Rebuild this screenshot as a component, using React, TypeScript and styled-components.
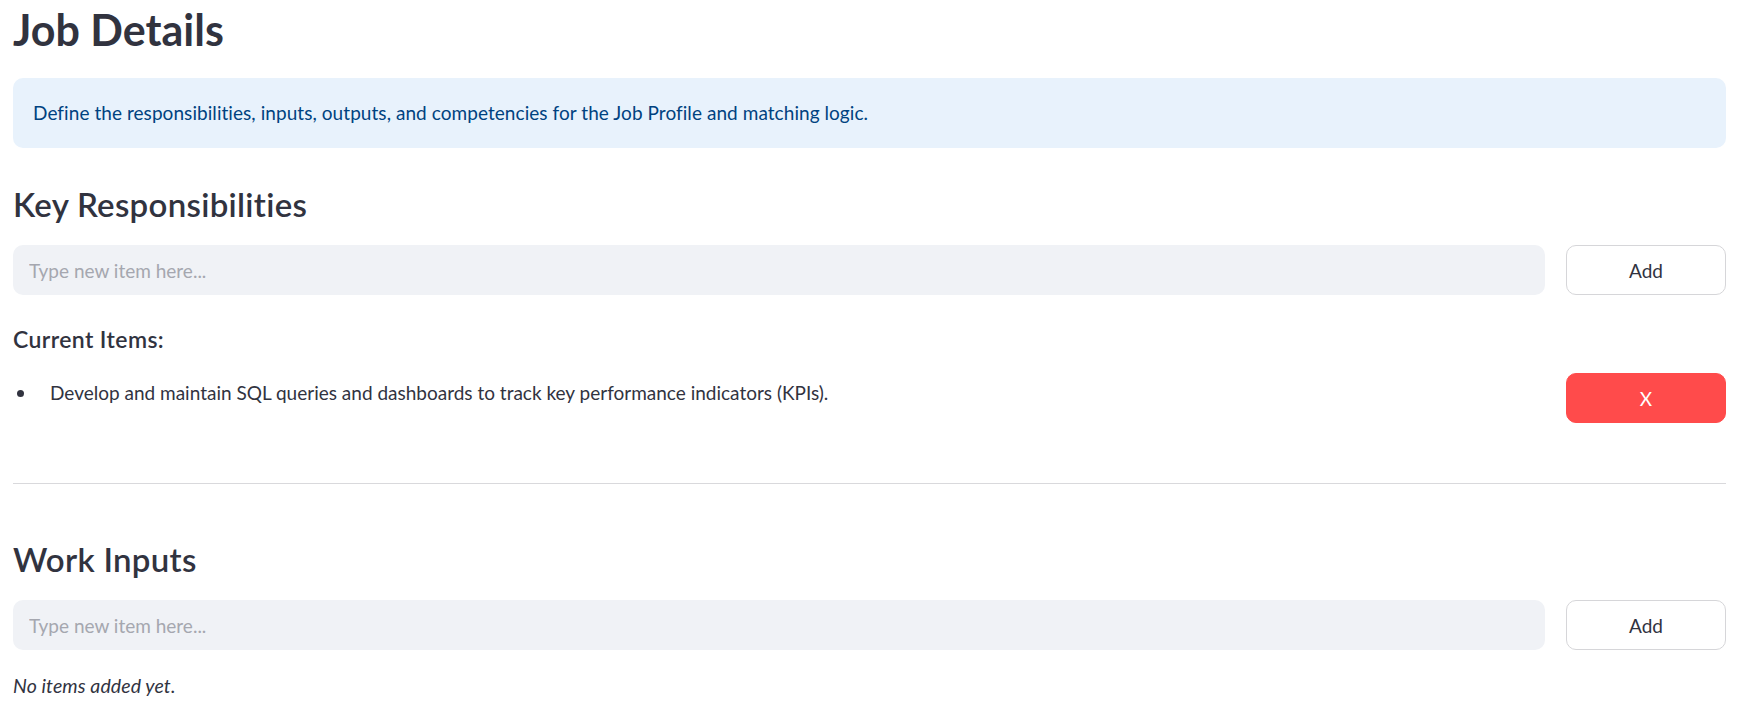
import React from "react";
import styled, { createGlobalStyle } from "styled-components";

const Global = createGlobalStyle`
  html, body { margin: 0; padding: 0; background: #ffffff; }
  body {
    font-family: "Lato", "Noto Sans", sans-serif;
    color: #31333f;
    -webkit-font-smoothing: antialiased;
  }
  * { box-sizing: border-box; }
`;

const Page = styled.main`
  width: 1760px;
  padding: 3px 34px 0 13px;
  display: flex;
  flex-direction: column;
`;

const Title = styled.h2`
  margin: 0;
  font-size: 43px;
  line-height: 54px;
  font-weight: 700;
  color: #31333f;
`;

const InfoBox = styled.div`
  margin-top: 21px;
  background: #e8f2fc;
  border-radius: 10px;
  padding: 20px 20px;
  color: #004280;
  font-size: 19px;
  line-height: 30px;
  letter-spacing: 0.06px;
`;

const SubHeader = styled.h3<{ $top: number }>`
  margin: ${(p) => p.$top}px 0 0;
  font-size: 33px;
  line-height: 40px;
  font-weight: 600;
  letter-spacing: 0.3px;
  color: #31333f;
`;

const InputRow = styled.div`
  margin-top: 21px;
  display: grid;
  grid-template-columns: 1fr 160px;
  column-gap: 21px;
  align-items: start;
`;

const TextInput = styled.input`
  height: 50px;
  width: 100%;
  border: none;
  outline: none;
  border-radius: 10px;
  background: #f0f2f6;
  padding: 0 16px;
  font-family: inherit;
  font-size: 19px;
  color: #31333f;
  &::placeholder { color: #a5a7af; }
`;

const Button = styled.button<{ $danger?: boolean }>`
  height: 50px;
  width: 100%;
  border-radius: 10px;
  font-family: inherit;
  font-size: 19px;
  cursor: pointer;
  border: 1px solid ${(p) => (p.$danger ? "#ff4b4b" : "#d6d6d9")};
  background: ${(p) => (p.$danger ? "#ff4b4b" : "#ffffff")};
  color: ${(p) => (p.$danger ? "#ffffff" : "#31333f")};
`;

const ListLabel = styled.h5`
  margin: 29px 0 0;
  font-size: 23px;
  line-height: 30px;
  font-weight: 600;
  letter-spacing: 0.4px;
  color: #31333f;
`;

const ItemRow = styled.div`
  margin-top: 19px;
  display: grid;
  grid-template-columns: 1fr 160px;
  column-gap: 21px;
  align-items: start;
`;

const Bullet = styled.div`
  margin-top: 5px;
  display: flex;
  align-items: center;
  font-size: 19px;
  line-height: 30px;
  color: #31333f;
  &::before {
    content: "";
    width: 7px;
    height: 7px;
    border-radius: 50%;
    background: #31333f;
    margin: 0 26px 0 4px;
    flex: none;
  }
`;

const Divider = styled.hr`
  margin: 60px 0 0;
  border: none;
  border-top: 1px solid #d9d9dc;
  width: 100%;
`;

const Empty = styled.p`
  margin: 21px 0 0;
  font-size: 19.5px;
  line-height: 30px;
  font-style: italic;
  letter-spacing: 0.1px;
  color: #31333f;
`;

export default function App() {
  return (
    <>
      <Global />
      <Page>
        <Title>Job Details</Title>
        <InfoBox>
          Define the responsibilities, inputs, outputs, and competencies for the Job Profile and matching logic.
        </InfoBox>

        <SubHeader $top={36}>Key Responsibilities</SubHeader>
        <InputRow>
          <TextInput placeholder="Type new item here..." />
          <Button>Add</Button>
        </InputRow>
        <ListLabel>Current Items:</ListLabel>
        <ItemRow>
          <Bullet>Develop and maintain SQL queries and dashboards to track key performance indicators (KPIs).</Bullet>
          <Button $danger>X</Button>
        </ItemRow>
        <Divider />

        <SubHeader $top={55}>Work Inputs</SubHeader>
        <InputRow>
          <TextInput placeholder="Type new item here..." />
          <Button>Add</Button>
        </InputRow>
        <Empty>No items added yet.</Empty>
      </Page>
    </>
  );
}
